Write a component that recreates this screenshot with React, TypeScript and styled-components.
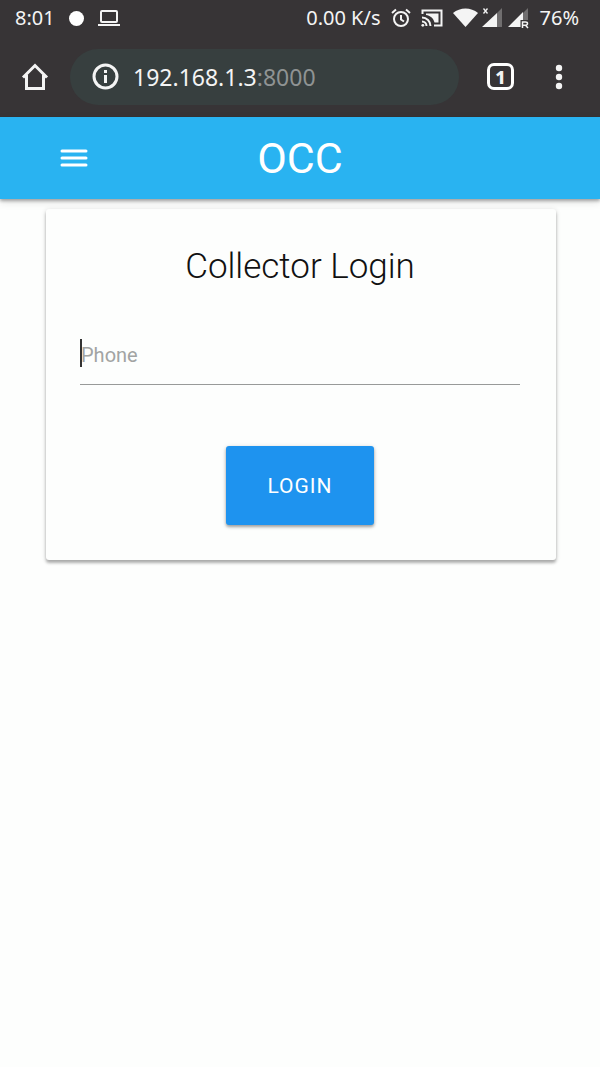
import React from "react";
import styled, { createGlobalStyle } from "styled-components";

const GlobalStyle = createGlobalStyle`
  * { box-sizing: border-box; }
  html, body { margin: 0; background: #fdfefd; }
  body { font-family: Roboto, "Liberation Sans", sans-serif; }
`;

const Page = styled.div`
  min-height: 100vh;
  background: #fdfefd;
`;

const SystemArea = styled.div`
  background: #373436;
  color: #f4f4f4;
  font-family: "Noto Sans", sans-serif;
`;

const StatusBar = styled.div`
  display: flex;
  align-items: center;
  justify-content: space-between;
  height: 36px;
  padding: 0 21px 0 15px;
  font-size: 20px;
  line-height: 36px;
`;

const StatusGroup = styled.div<{ $gap: number }>`
  display: flex;
  align-items: center;
  gap: ${(p) => p.$gap}px;
  white-space: nowrap;
`;

const Dot = styled.span`
  width: 15px;
  height: 15px;
  border-radius: 50%;
  background: #fff;
`;

const BrowserBar = styled.div`
  display: flex;
  align-items: center;
  height: 81px;
  padding: 0 36px 0 20px;
`;

const IconButton = styled.button`
  display: flex;
  align-items: center;
  justify-content: center;
  padding: 0;
  border: 0;
  background: none;
  color: inherit;
  cursor: pointer;
`;

const AddressBar = styled.div`
  display: flex;
  align-items: center;
  flex: 1;
  gap: 14px;
  height: 56px;
  margin: 0 28px 0 20px;
  padding: 0 22px;
  border-radius: 28px;
  background: #373f3f;
`;

const Url = styled.span`
  font-size: 23px;
  line-height: 30px;
  white-space: nowrap;
`;

const Port = styled.span`
  color: #8f9393;
`;

const TabCount = styled.span`
  display: flex;
  align-items: center;
  justify-content: center;
  width: 27px;
  height: 27px;
  border: 3px solid #fff;
  border-radius: 7px;
  font-family: "Noto Sans", sans-serif;
  font-size: 18px;
  font-weight: 800;
  line-height: 20px;
`;

const TabsButton = styled(IconButton)`
  margin-right: 40px;
`;

const NavBar = styled.header`
  position: relative;
  display: grid;
  grid-template-columns: 1fr auto 1fr;
  align-items: center;
  height: 82px;
  padding: 0 59px;
  background: #29b3f1;
  color: #fff;
  box-shadow: 0 2px 3px rgba(0, 0, 0, 0.3), 0 3px 8px rgba(0, 0, 0, 0.12);
`;

const MenuButton = styled(IconButton)`
  justify-self: start;
`;

const Brand = styled.a`
  color: inherit;
  font-size: 43px;
  line-height: 82px;
  text-decoration: none;
`;

const Main = styled.main`
  padding: 10px 44px 0 46px;
`;

const Card = styled.form`
  display: flex;
  flex-direction: column;
  align-items: center;
  padding: 34px 36px 35px 34px;
  border-radius: 3px;
  background: #fdfefd;
  box-shadow: 0 3px 3px rgba(0, 0, 0, 0.26), 0 1px 5px rgba(0, 0, 0, 0.16);
`;

const Title = styled.h1`
  margin: 0;
  color: #111;
  font-size: 35px;
  font-weight: 300;
  line-height: 48px;
`;

const Field = styled.div`
  position: relative;
  width: 100%;
  margin: 34px 0 61px;
`;

const PhoneInput = styled.input`
  display: block;
  width: 100%;
  height: 60px;
  padding: 0 1px;
  border: 0;
  border-bottom: 1px solid #989a99;
  border-radius: 0;
  outline: none;
  background: transparent;
  font-family: inherit;
  font-size: 20px;
  &::placeholder { color: #a2a4a3; opacity: 1; }
`;

const Caret = styled.span`
  position: absolute;
  top: 14px;
  left: 0;
  width: 2px;
  height: 28px;
  background: #333;
`;

const LoginButton = styled.button`
  min-width: 148px;
  height: 79px;
  padding: 0 40px;
  border: 0;
  border-radius: 3px;
  background: #1e93ef;
  color: #fff;
  font-family: inherit;
  font-size: 21px;
  letter-spacing: 1px;
  cursor: pointer;
  box-shadow: 0 2px 3px rgba(0, 0, 0, 0.3), 0 1px 5px rgba(0, 0, 0, 0.15);
`;

const LaptopIcon = () => (
  <svg width="22" height="18" viewBox="0 0 22 18" fill="none" stroke="currentColor" strokeWidth="2" strokeLinejoin="round">
    <rect x="3" y="2" width="16" height="11" rx="1" />
    <path d="M0 16h22" />
  </svg>
);

const AlarmIcon = () => (
  <svg width="20" height="20" viewBox="0 0 20 20" fill="none" stroke="currentColor" strokeWidth="2">
    <circle cx="10" cy="11" r="7" />
    <path d="M10 7v4.5l3 2M1 5l4-3.5M19 5l-4-3.5" />
  </svg>
);

const CastIcon = () => (
  <svg width="22" height="18" viewBox="0 0 22 18" fill="none" stroke="currentColor" strokeWidth="2">
    <path d="M1.500 5V1.500h19v15H13" />
    <path d="M5 4.500h12.500v9H13.500C12.500 9 9 6.500 5 6z" fill="currentColor" stroke="none" />
    <path d="M1 8.500a8.500 8.500 0 0 1 8.500 8.500M1 12.500A4.500 4.500 0 0 1 5.500 17" />
    <circle cx="1.800" cy="16.300" r="1.400" fill="currentColor" stroke="none" />
  </svg>
);

const SignalIcons = () => (
  <svg width="77" height="24" viewBox="0 0 77 24" fill="currentColor">
    <path d="M0 7C7 1 18 1 25 7L12.500 21z" />
    <path d="M30.500 2.500l4 5M34.500 2.500l-4 5" stroke="currentColor" strokeWidth="1.300" />
    <path d="M44 7l5-5v19h-5z" opacity="0.3" />
    <path d="M29 21L44 7v14z" />
    <path d="M70 7l5-5v12h-5z" opacity="0.3" />
    <path d="M55 21L70 6v8h-2.500v7z" />
    <path d="M69.500 22v-6h3q2 0 2 1.600t-2 1.600h-3m3 0l2.500 2.800" fill="none" stroke="currentColor" strokeWidth="1.500" />
  </svg>
);

const HomeIcon = () => (
  <svg width="30" height="30" viewBox="0 0 30 30" fill="none" stroke="currentColor" strokeWidth="3">
    <path d="M3 15.500L15 3.500l12 12M6.500 13v13.500h17V13" />
  </svg>
);

const InfoIcon = () => (
  <svg width="27" height="27" viewBox="0 0 27 27" fill="none" stroke="currentColor" strokeWidth="3">
    <circle cx="13.500" cy="13.500" r="11.500" />
    <path d="M13.500 12v8M13.500 7v3" />
  </svg>
);

const MoreIcon = () => (
  <svg width="10" height="26" viewBox="0 0 10 26" fill="currentColor">
    <circle cx="5" cy="4" r="3.200" />
    <circle cx="5" cy="13" r="3.200" />
    <circle cx="5" cy="22" r="3.200" />
  </svg>
);

const MenuIcon = () => (
  <svg width="30" height="22" viewBox="0 0 30 22" stroke="currentColor" strokeWidth="3" strokeLinecap="round">
    <path d="M3 4h24M3 11h24M3 18h24" />
  </svg>
);

export default function App() {
  return (
    <Page>
      <GlobalStyle />
      <SystemArea>
        <StatusBar>
          <StatusGroup $gap={14}>
            <span>8:01</span>
            <Dot />
            <LaptopIcon />
          </StatusGroup>
          <StatusGroup $gap={10}>
            <span>0.00 K/s</span>
            <AlarmIcon />
            <CastIcon />
            <SignalIcons />
            <span>76%</span>
          </StatusGroup>
        </StatusBar>
        <BrowserBar>
          <IconButton type="button" aria-label="Home">
            <HomeIcon />
          </IconButton>
          <AddressBar>
            <InfoIcon />
            <Url>
              192.168.1.3<Port>:8000</Port>
            </Url>
          </AddressBar>
          <TabsButton type="button" aria-label="Open tabs">
            <TabCount>1</TabCount>
          </TabsButton>
          <IconButton type="button" aria-label="More options">
            <MoreIcon />
          </IconButton>
        </BrowserBar>
      </SystemArea>
      <NavBar>
        <MenuButton type="button" aria-label="Menu">
          <MenuIcon />
        </MenuButton>
        <Brand href="#">OCC</Brand>
      </NavBar>
      <Main>
        <Card onSubmit={(e) => e.preventDefault()}>
          <Title>Collector Login</Title>
          <Field>
            <PhoneInput id="phone" type="tel" placeholder="Phone" aria-label="Phone" />
            <Caret />
          </Field>
          <LoginButton type="submit">LOGIN</LoginButton>
        </Card>
      </Main>
    </Page>
  );
}
